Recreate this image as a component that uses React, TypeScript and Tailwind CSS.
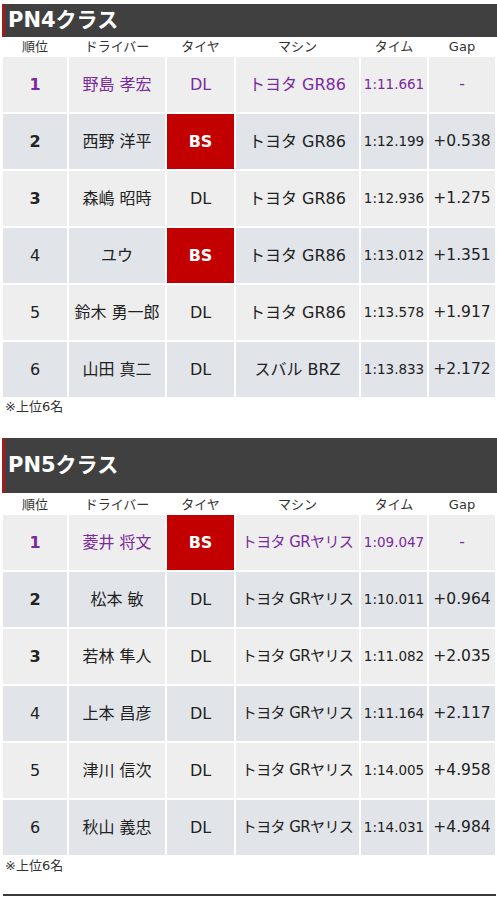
type Row = {
  pos: number
  driver: string
  tire: 'DL' | 'BS'
  machine: string
  time: string
  gap: string
}

const pn4: Row[] = [
  { pos: 1, driver: '野島 孝宏', tire: 'DL', machine: 'トヨタ GR86', time: '1:11.661', gap: '-' },
  { pos: 2, driver: '西野 洋平', tire: 'BS', machine: 'トヨタ GR86', time: '1:12.199', gap: '+0.538' },
  { pos: 3, driver: '森嶋 昭時', tire: 'DL', machine: 'トヨタ GR86', time: '1:12.936', gap: '+1.275' },
  { pos: 4, driver: 'ユウ', tire: 'BS', machine: 'トヨタ GR86', time: '1:13.012', gap: '+1.351' },
  { pos: 5, driver: '鈴木 勇一郎', tire: 'DL', machine: 'トヨタ GR86', time: '1:13.578', gap: '+1.917' },
  { pos: 6, driver: '山田 真二', tire: 'DL', machine: 'スバル BRZ', time: '1:13.833', gap: '+2.172' },
]

const pn5: Row[] = [
  { pos: 1, driver: '菱井 将文', tire: 'BS', machine: 'トヨタ GRヤリス', time: '1:09.047', gap: '-' },
  { pos: 2, driver: '松本 敏', tire: 'DL', machine: 'トヨタ GRヤリス', time: '1:10.011', gap: '+0.964' },
  { pos: 3, driver: '若林 隼人', tire: 'DL', machine: 'トヨタ GRヤリス', time: '1:11.082', gap: '+2.035' },
  { pos: 4, driver: '上本 昌彦', tire: 'DL', machine: 'トヨタ GRヤリス', time: '1:11.164', gap: '+2.117' },
  { pos: 5, driver: '津川 信次', tire: 'DL', machine: 'トヨタ GRヤリス', time: '1:14.005', gap: '+4.958' },
  { pos: 6, driver: '秋山 義忠', tire: 'DL', machine: 'トヨタ GRヤリス', time: '1:14.031', gap: '+4.984' },
]

const cols = 'grid grid-cols-[64px_96px_67px_123px_66px_66px] gap-x-[2px]'

function ResultTable({ rows, narrowMachine }: { rows: Row[]; narrowMachine?: boolean }) {
  return (
    <div className="ml-[3px] w-[492px]">
      <div className={`${cols} h-[20px] items-center text-center text-[13px] text-[#333]`}>
        <div>順位</div>
        <div>ドライバー</div>
        <div>タイヤ</div>
        <div>マシン</div>
        <div>タイム</div>
        <div>Gap</div>
      </div>
      <div className="flex flex-col gap-y-[2px]">
        {rows.map((r, i) => {
          const top = r.pos === 1
          const bg = i % 2 === 0 ? 'bg-[#eeeeee]' : 'bg-[#e1e4e9]'
          const color = top ? 'text-[#7b2a9e]' : 'text-[#222]'
          return (
            <div key={r.pos} className={`${cols} h-[55px] text-center ${color}`}>
              <div className={`${bg} flex items-center justify-center text-[16px] ${r.pos <= 3 ? 'font-bold' : ''}`}>
                {r.pos}
              </div>
              <div className={`${bg} flex items-center justify-center text-[16px] whitespace-nowrap`}>{r.driver}</div>
              {r.tire === 'BS' ? (
                <div className="flex items-center justify-center bg-[#c30000] text-[16px] font-bold text-white">BS</div>
              ) : (
                <div className={`${bg} flex items-center justify-center text-[16px]`}>DL</div>
              )}
              <div
                className={`${bg} flex items-center justify-center whitespace-nowrap ${
                  narrowMachine ? 'text-[15px] tracking-[-0.6px]' : 'text-[16px]'
                }`}>
                {r.machine}
              </div>
              <div className={`${bg} flex items-center justify-center text-[13.5px]`}>{r.time}</div>
              <div className={`${bg} flex items-center justify-center text-[15.5px]`}>{r.gap}</div>
            </div>
          )
        })}
      </div>
    </div>
  )
}

function ClassHeader({ title, tall }: { title: string; tall?: boolean }) {
  return (
    <div
      className={`ml-[2px] flex items-center border-l-[3px] border-[#a31b1b] bg-[#404040] pl-[3px] text-[21px] font-bold text-white ${
        tall ? 'h-[55px]' : 'h-[33px]'
      }`}>
      {title}
    </div>
  )
}

export default function App() {
  return (
    <div className="min-h-[897px] w-[497px] bg-white pt-[4px] font-['DejaVu_Sans','Noto_Sans_CJK_JP',sans-serif] text-[#222]">
      <ClassHeader title="PN4クラス" />
      <ResultTable rows={pn4} />
      <p className="ml-[5px] h-[18px] pt-[1px] text-[13px] leading-[18px] text-[#333]">※上位6名</p>

      <div className="mt-[23px]">
        <ClassHeader title="PN5クラス" tall />
      </div>
      <div className="pt-[2px]">
        <ResultTable rows={pn5} narrowMachine />
      </div>
      <p className="ml-[5px] h-[18px] pt-[2px] text-[13px] leading-[18px] text-[#333]">※上位6名</p>

      <div className="mt-[21px] ml-[3px] h-[2px] w-[493px] bg-[#3a3a3a]" />
    </div>
  )
}
